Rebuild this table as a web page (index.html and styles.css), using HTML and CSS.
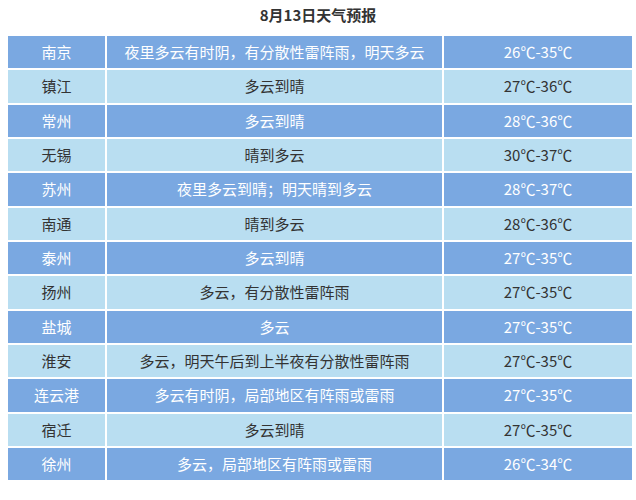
FILE: index.html
```html
<!DOCTYPE html>
<html lang="zh">
<head>
<meta charset="utf-8">
<title>8月13日天气预报</title>
<link rel="stylesheet" href="styles.css">
</head>
<body>
<div class="title">8月13日天气预报</div>
<table class="forecast">
<tbody>
<tr class="dark"><td class="city">南京</td><td class="desc">夜里多云有时阴，有分散性雷阵雨，明天多云</td><td class="temp">26℃-35℃</td></tr>
<tr class="light"><td class="city">镇江</td><td class="desc">多云到晴</td><td class="temp">27℃-36℃</td></tr>
<tr class="dark"><td class="city">常州</td><td class="desc">多云到晴</td><td class="temp">28℃-36℃</td></tr>
<tr class="light"><td class="city">无锡</td><td class="desc">晴到多云</td><td class="temp">30℃-37℃</td></tr>
<tr class="dark"><td class="city">苏州</td><td class="desc">夜里多云到晴；明天晴到多云</td><td class="temp">28℃-37℃</td></tr>
<tr class="light"><td class="city">南通</td><td class="desc">晴到多云</td><td class="temp">28℃-36℃</td></tr>
<tr class="dark"><td class="city">泰州</td><td class="desc">多云到晴</td><td class="temp">27℃-35℃</td></tr>
<tr class="light"><td class="city">扬州</td><td class="desc">多云，有分散性雷阵雨</td><td class="temp">27℃-35℃</td></tr>
<tr class="dark"><td class="city">盐城</td><td class="desc">多云</td><td class="temp">27℃-35℃</td></tr>
<tr class="light"><td class="city">淮安</td><td class="desc">多云，明天午后到上半夜有分散性雷阵雨</td><td class="temp">27℃-35℃</td></tr>
<tr class="dark"><td class="city">连云港</td><td class="desc">多云有时阴，局部地区有阵雨或雷雨</td><td class="temp">27℃-35℃</td></tr>
<tr class="light"><td class="city">宿迁</td><td class="desc">多云到晴</td><td class="temp">27℃-35℃</td></tr>
<tr class="dark"><td class="city">徐州</td><td class="desc">多云，局部地区有阵雨或雷雨</td><td class="temp">26℃-34℃</td></tr>
</tbody>
</table>
</body>
</html>
```
FILE: styles.css
```css
html, body {
  margin: 0;
  padding: 0;
  background: #ffffff;
}
body {
  width: 636px;
  font-family: "Noto Sans CJK SC", "Noto Sans", sans-serif;
  color: #333333;
}
.title {
  height: 34px;
  line-height: 30px;
  text-align: center;
  font-size: 15px;
  font-weight: bold;
  color: #333333;
}
.forecast {
  margin-left: 6px;
  width: 628px;
  border-collapse: separate;
  border-spacing: 2px;
  table-layout: fixed;
}
.forecast td {
  height: 32.34px;
  padding: 0;
  text-align: center;
  font-size: 15px;
  line-height: 32px;
  white-space: nowrap;
}
.city { width: 97px; }
.desc { width: 335px; }
.temp { width: 188px; }
.dark td {
  background: #7aa8e1;
  color: #ffffff;
}
.light td {
  background: #b9def1;
  color: #333333;
}
```
